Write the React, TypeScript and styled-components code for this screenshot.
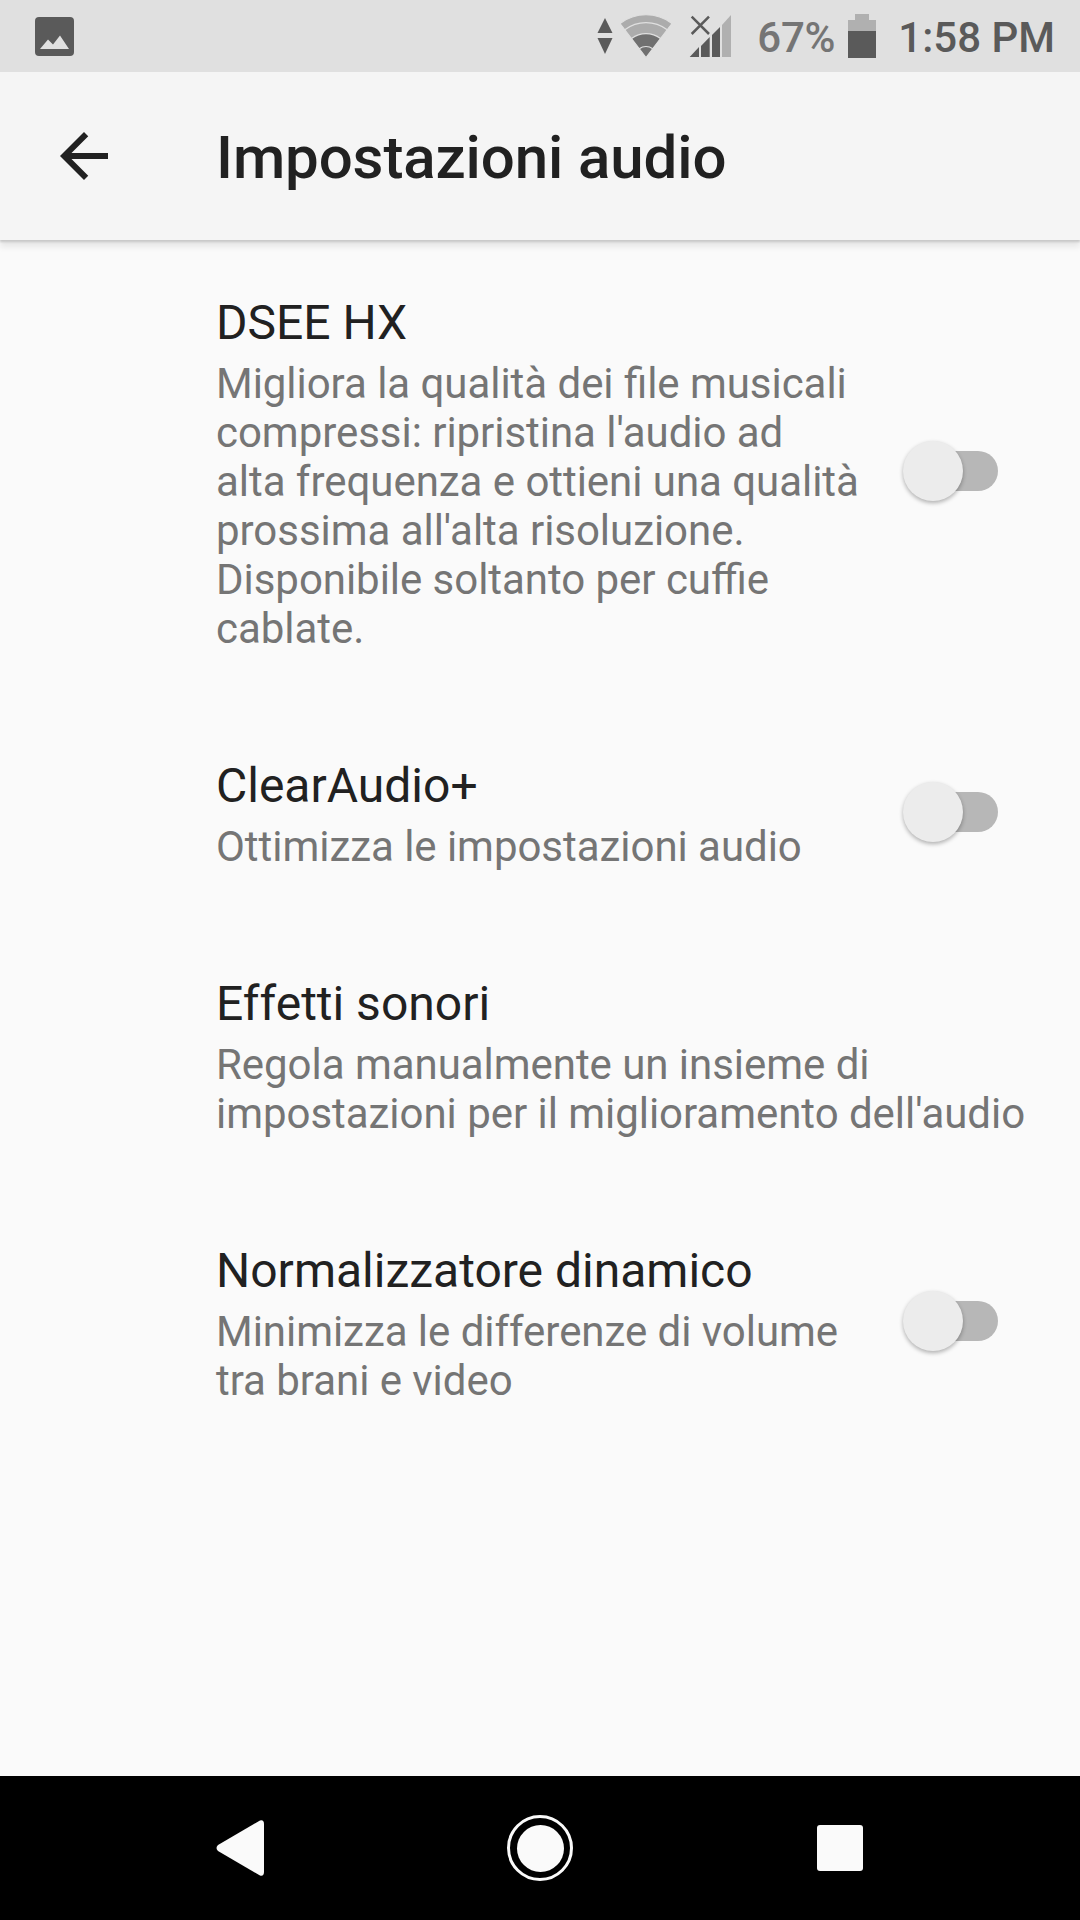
import React from "react";
import styled, { createGlobalStyle } from "styled-components";

const Global = createGlobalStyle`
  html, body { margin: 0; padding: 0; background: #fafafa; }
  body { font-family: Roboto, "Noto Sans", sans-serif; }
  #root { width: 1080px; height: 1920px; overflow: hidden; }
`;

const Screen = styled.div`
  width: 1080px;
  height: 1920px;
  display: flex;
  flex-direction: column;
  background: #fafafa;
`;

const StatusBar = styled.div`
  height: 72px;
  flex: none;
  background: #e0e0e0;
  display: flex;
  align-items: center;
  justify-content: space-between;
  padding: 0 25px 0 35px;
  color: #5a5a5a;
`;

const StatusRight = styled.div`
  display: flex;
  align-items: center;
`;

const StatusIcon = styled.svg<{ $ml: number }>`
  display: block;
  flex: none;
  margin-left: ${(p) => p.$ml}px;
`;

const Percent = styled.span`
  font-size: 42px;
  font-weight: 500;
  color: #757575;
  margin-left: 26px;
  padding-top: 2px;
  letter-spacing: -0.2px;
`;

const Clock = styled.span`
  font-size: 42px;
  font-weight: 500;
  color: #5a5a5a;
  margin-left: 22px;
  padding-top: 2px;
`;

const AppBar = styled.header`
  height: 168px;
  flex: none;
  background: #f5f5f5;
  display: flex;
  align-items: center;
  padding-left: 48px;
  box-shadow: 0 2px 2px #c8c8c8, 0 7px 6px rgba(0, 0, 0, 0.08);
  position: relative;
  z-index: 1;
`;

const BackIcon = styled.svg`
  width: 72px;
  height: 72px;
  flex: none;
  fill: #212121;
`;

const Title = styled.h1`
  margin: 0 0 0 96px;
  padding-top: 2px;
  font-size: 60px;
  font-weight: 500;
  letter-spacing: -0.1px;
  color: #212121;
`;

const List = styled.main`
  flex: 1;
  padding-top: 3px;
`;

const Row = styled.section`
  display: flex;
  align-items: center;
  padding: 52px 0 53px 216px;
`;

const RowText = styled.div`
  flex: 1;
  min-width: 0;
`;

const RowTitle = styled.div`
  font-size: 48px;
  line-height: 56px;
  color: #212121;
  margin-bottom: 8px;
`;

const RowSub = styled.div`
  font-size: 42px;
  line-height: 49px;
  color: #757575;
  white-space: pre-line;
  letter-spacing: -0.04px;
  font-feature-settings: "liga" 1;
`;

const Switch = styled.div`
  position: relative;
  width: 95px;
  height: 40px;
  flex: none;
  margin: 0 82px 6px 0;
`;

const Track = styled.div`
  position: absolute;
  left: 12px;
  right: 0;
  top: 0;
  bottom: 0;
  border-radius: 20px;
  background: #b7b7b7;
`;

const Thumb = styled.div`
  position: absolute;
  left: 0;
  top: -10px;
  width: 60px;
  height: 60px;
  border-radius: 50%;
  background: #ececec;
  box-shadow: 0 2px 4px rgba(0, 0, 0, 0.3);
`;

const NavBar = styled.nav`
  height: 144px;
  flex: none;
  background: #000;
  display: grid;
  grid-template-columns: 48px 66px 45px;
  justify-content: start;
  align-items: center;
  padding-left: 216px;
`;

const NavBack = styled.svg`
  width: 48px;
  height: 56px;
  fill: #fafafa;
`;

const NavHome = styled.div`
  width: 66px;
  height: 66px;
  box-sizing: border-box;
  border: 3px solid #fafafa;
  border-radius: 50%;
  margin-left: 243px;
  display: flex;
  align-items: center;
  justify-content: center;
`;

const NavHomeDot = styled.div`
  width: 47px;
  height: 47px;
  flex: none;
  border-radius: 50%;
  background: #fafafa;
`;

const NavSquare = styled.div`
  width: 46px;
  height: 46px;
  border-radius: 3px;
  background: #fafafa;
  margin-left: 487px;
`;

const rows = [
  {
    title: "DSEE HX",
    sub: "Migliora la qualità dei file musicali\ncompressi: ripristina l'audio ad\nalta frequenza e ottieni una qualità\nprossima all'alta risoluzione.\nDisponibile soltanto per cuffie\ncablate.",
    toggle: true,
  },
  { title: "ClearAudio+", sub: "Ottimizza le impostazioni audio", toggle: true },
  {
    title: "Effetti sonori",
    sub: "Regola manualmente un insieme di\nimpostazioni per il miglioramento dell'audio",
    toggle: false,
  },
  {
    title: "Normalizzatore dinamico",
    sub: "Minimizza le differenze di volume\ntra brani e video",
    toggle: true,
  },
];

export default function App() {
  return (
    <Screen>
      <Global />
      <StatusBar>
        <svg width="39" height="39" viewBox="0 0 39 39">
          <rect width="39" height="39" rx="4" fill="#5a5a5a" />
          <path d="M5 32 L13 22.5 L18 27.5 L25 18.5 L34 32 Z" fill="#e0e0e0" />
        </svg>
        <StatusRight>
          <StatusIcon $ml={0} width="16" height="36" viewBox="0 0 16 36">
            <path d="M8 0 L15.5 15 H0.5 Z M0.5 20 H15.5 L8 36 Z" fill="#5a5a5a" />
          </StatusIcon>
          <StatusIcon $ml={7} width="52" height="44" viewBox="0 0 52 44">
            <g stroke="#e0e0e0" strokeWidth="1.2">
              <path d="M26 43.5 L0 9.5 A43 43 0 0 1 52 9.5 Z" fill="#acacac" />
              <path d="M26 43.5 L4.8 15.8 A35 35 0 0 1 47.2 15.8 Z" fill="#acacac" />
              <path d="M26 43.5 L11.5 24.5 A24 24 0 0 1 40.5 24.5 Z" fill="#707070" />
              <path d="M26 43.5 L19.3 34.8 A11 11 0 0 1 32.7 34.8 Z" fill="#707070" />
            </g>
          </StatusIcon>
          <StatusIcon $ml={17} width="42" height="42" viewBox="0 0 42 42">
            <path d="M0.7 42 L10 32 V42 Z M12 31 L20.7 22 V42 H12 Z M23 20 L31 12 V42 H23 Z" fill="#5a5a5a" />
            <path d="M33 10 L42 0 V42 H33 Z" fill="#b0b0b0" />
            <path d="M2.7 1.7 L20 19 M20 1.7 L2.7 19" stroke="#5a5a5a" strokeWidth="2.5" fill="none" />
          </StatusIcon>
          <Percent>67%</Percent>
          <StatusIcon $ml={13} width="28" height="44" viewBox="0 0 28 44">
            <path d="M7 0 H21 V6 H28 V17 H0 V6 H7 Z" fill="#b0b0b0" />
            <rect x="0" y="17" width="28" height="27" fill="#5a5a5a" />
          </StatusIcon>
          <Clock>1:58 PM</Clock>
        </StatusRight>
      </StatusBar>
      <AppBar>
        <BackIcon viewBox="0 0 24 24">
          <path d="M20 11H7.83l5.59-5.59L12 4l-8 8 8 8 1.41-1.41L7.83 13H20v-2z" />
        </BackIcon>
        <Title>Impostazioni audio</Title>
      </AppBar>
      <List>
        {rows.map((r) => (
          <Row key={r.title}>
            <RowText>
              <RowTitle>{r.title}</RowTitle>
              <RowSub>{r.sub}</RowSub>
            </RowText>
            {r.toggle && (
              <Switch>
                <Track />
                <Thumb />
              </Switch>
            )}
          </Row>
        ))}
      </List>
      <NavBar>
        <NavBack viewBox="0 0 48 56">
          <path d="M44 0.5 Q48 -0.5 48 4 V52 Q48 56.5 44 55.5 L2 31 Q-1 28 2 25 Z" />
        </NavBack>
        <NavHome>
          <NavHomeDot />
        </NavHome>
        <NavSquare />
      </NavBar>
    </Screen>
  );
}
